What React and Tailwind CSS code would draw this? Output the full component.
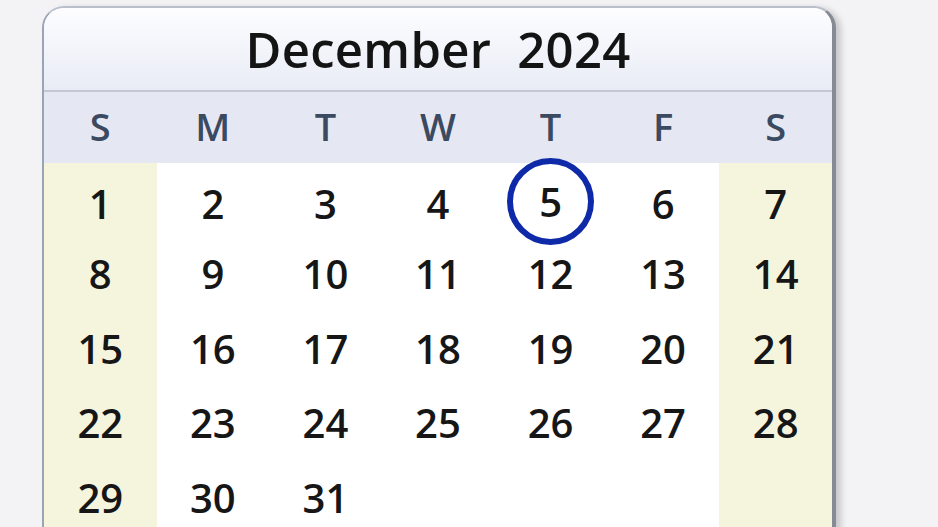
const DAYS = ['S', 'M', 'T', 'W', 'T', 'F', 'S'];

// December 2024 starts on a Sunday
const WEEKS = [
  [1, 2, 3, 4, 5, 6, 7],
  [8, 9, 10, 11, 12, 13, 14],
  [15, 16, 17, 18, 19, 20, 21],
  [22, 23, 24, 25, 26, 27, 28],
  [29, 30, 31, null, null, null, null],
];

const TODAY = 5;

export default function App() {
  return (
    <div className="h-[527px] w-[938px] overflow-hidden bg-[#f3f3f6] pt-[6px] pl-[42px] font-['Open_Sans','Noto_Sans',sans-serif]">
      <div className="w-[794px] rounded-t-[22px] border-t-2 border-l-2 border-r-[4px] border-t-[#b9c0cc] border-l-[#9aa4b4] border-r-[#868a92] shadow-[5px_2px_6px_rgba(0,0,0,0.18)] overflow-hidden bg-white">
        {/* month title */}
        <div className="h-[84px] flex items-center justify-center bg-gradient-to-b from-[#fdfdff] to-[#e9ecf6] border-b-2 border-[#c3c8d2]">
          <span className="text-[49px] font-semibold text-[#141414] whitespace-pre tracking-[0.3px] mt-[2px]">December  2024</span>
        </div>

        {/* weekday names */}
        <div className="h-[71px] grid grid-cols-7 bg-[#e5e8f3]">
          {DAYS.map((d, i) => (
            <div key={i} className="flex items-center justify-center text-[38px] font-semibold text-[#3b4a60] -mt-[3px]">
              {d}
            </div>
          ))}
        </div>

        {/* dates */}
        {WEEKS.map((week, r) => (
          <div key={r} className="h-[74.5px] grid grid-cols-7">
            {week.map((n, c) => {
              const weekend = c === 0 || c === 6;
              return (
                <div
                  key={c}
                  className={`flex items-center justify-center ${weekend ? 'bg-[#f5f5de]' : 'bg-white'}`}
                >
                  {n === TODAY ? (
                    <div className="relative z-10 w-[87px] h-[87px] shrink-0 rounded-full border-[6px] border-[#0f2aa8] flex items-center justify-center -mt-[5px]">
                      <span className="text-[40px] font-semibold text-[#161616]">{n}</span>
                    </div>
                  ) : (
                    <span className="text-[40px] font-semibold text-[#161616] -mt-[1px]">{n ?? ''}</span>
                  )}
                </div>
              );
            })}
          </div>
        ))}
      </div>
    </div>
  );
}
